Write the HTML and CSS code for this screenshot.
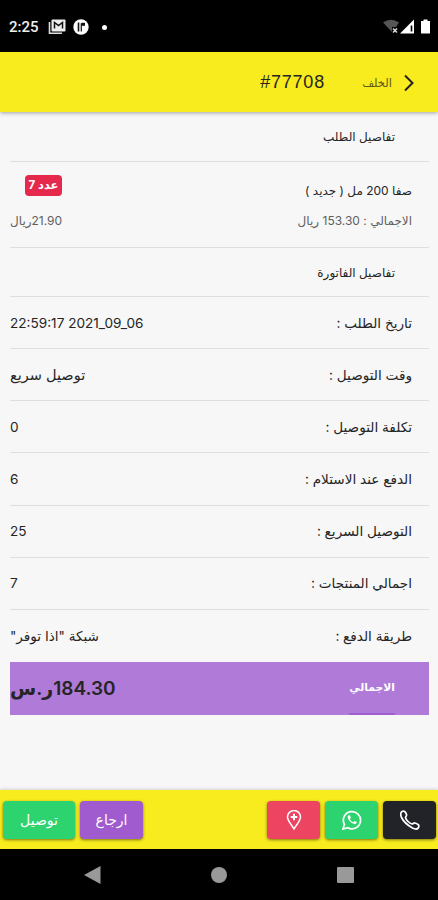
FILE: index.html
```
<!DOCTYPE html>
<html lang="ar" dir="rtl">
<head>
    <meta charset="UTF-8">
    <meta name="viewport" content="width=device-width, initial-scale=1.0">
    <title>تفاصيل الطلب</title>
    <link rel="stylesheet" href="styles.css">
</head>
<body>
    <div class="status-bar" dir="ltr">
        <span class="clock">2:25</span>
        <svg class="mail" width="18" height="16" viewBox="0 0 18 16">
            <path d="M1.500 3v11.300H14" fill="none" stroke="#ddd" stroke-width="1.600"/>
            <rect x="3.500" y="0.500" width="14" height="12" rx="1" fill="#eee"/>
            <path d="M6.500 9.500V3.500l4 3 4-3v6" fill="none" stroke="#111" stroke-width="1.500"/>
        </svg>
        <svg class="app" width="16" height="16" viewBox="0 0 16 16">
            <circle cx="8" cy="8" r="7.700" fill="#fff"/>
            <path d="M5.500 3.500v9" fill="none" stroke="#111" stroke-width="1.600"/>
            <path d="M8.300 12.500v-8.300" fill="none" stroke="#111" stroke-width="1.200"/>
            <path d="M8.500 3.800h3.500v3h-3.500z" fill="#111"/>
        </svg>
        <span class="dot"></span>
        <svg class="signals" width="48" height="16" viewBox="0 0 48 16">
            <path d="M0 3.500Q8-2 16 3.500L13 8H9v5z" fill="#555"/>
            <path d="M10 9.500l4 4m0-4l-4 4" stroke="#ddd" stroke-width="1.500"/>
            <path d="M17 14.500L31 .5v14z" fill="#fff"/>
            <path d="M28.500 6.500v6" stroke="#000" stroke-width="1.600"/>
            <path d="M38 2h2.500V.5h4V2H47v12.500h-9z" fill="#fff"/>
        </svg>
    </div>

    <header class="header">
        <svg class="chevron" width="12" height="18" viewBox="0 0 12 18">
            <path d="M2 1.500L9.500 9 2 16.500" fill="none" stroke="#222" stroke-width="2"/>
        </svg>
        <span class="back">الخلف</span>
        <h1 dir="ltr">#77708</h1>
    </header>

    <main class="content">
        <h2 class="title">تفاصيل الطلب</h2>
        <div class="product">
            <div class="line">
                <span class="name">صفا 200 مل ( جديد )</span>
                <span class="badge">عدد 7</span>
            </div>
            <div class="line muted">
                <span>الاجمالي : 153.30 ريال</span>
                <span>21.90ريال</span>
            </div>
        </div>
        <h2 class="title invoice">تفاصيل الفاتورة</h2>
        <div class="row"><span>تاريخ الطلب :</span><span dir="ltr">22:59:17 2021_09_06</span></div>
        <div class="row"><span>وقت التوصيل :</span><span class="text">توصيل سريع</span></div>
        <div class="row"><span>تكلفة التوصيل :</span><span>0</span></div>
        <div class="row"><span>الدفع عند الاستلام :</span><span>6</span></div>
        <div class="row"><span>التوصيل السريع :</span><span>25</span></div>
        <div class="row"><span>اجمالي المنتجات :</span><span>7</span></div>
        <div class="row last"><span>طريقة الدفع :</span><span>شبكة "اذا توفر"</span></div>
        <div class="total">
            <span class="total-label">الاجمالي</span>
            <span class="total-value">184.30ر.س</span>
        </div>
    </main>

    <footer class="footer">
        <button class="btn icon dark">
            <svg width="20" height="20" viewBox="0 0 20 20" fill="none" stroke="#fff" stroke-width="1.700">
                <path d="M2 1.500C4 .5 5.500 1.500 6.500 4.500c.5 1.500-1 2-1 3 .5 2.500 4 6 6.500 6.500 1.200.2 1.500-1.500 3-1 3.500 1 4.500 2.500 3.500 4.500-1 2-3 2-6 .5C8 15.500 3.500 11.500 1.500 7.500.5 5 .5 2.500 2 1.500z"/>
            </svg>
        </button>
        <button class="btn icon green">
            <svg width="20" height="20" viewBox="0 0 20 20" fill="none">
                <path d="M1 19l1.400-4.700A8.600 8.600 0 1 1 5.800 17.700z" stroke="#fff" stroke-width="1.700"/>
                <path d="M6.700 5.200c-1.400.8-1.300 2.500-.3 4.100 1.400 2.300 3.400 4.200 5.800 4.800 1.200.3 2.500-.6 2.700-2l-2.400-1.200-1.200 1.300C9.700 11.500 8.500 10.300 7.900 8.900l1-1-.9-2.500z" fill="#fff"/>
            </svg>
        </button>
        <button class="btn icon red">
            <svg width="16" height="20" viewBox="0 0 16 20" fill="none" stroke="#fff" stroke-width="1.500">
                <path d="M8 19C6 15 1.500 11 1.500 7a6.500 6.500 0 0 1 13 0c0 4-4.500 8-6.500 12z"/>
                <path d="M8 3.700v6.600M4.700 7h6.600" stroke-width="2"/>
            </svg>
        </button>
        <button class="btn purple">ارجاع</button>
        <button class="btn green wide">توصيل</button>
    </footer>

    <div class="nav-bar" dir="ltr">
        <svg width="17" height="18" viewBox="0 0 17 18"><path d="M16.500 0v18L0 9z" fill="#999"/></svg>
        <svg width="16" height="16" viewBox="0 0 16 16"><circle cx="8" cy="8" r="8" fill="#999"/></svg>
        <svg width="17" height="16" viewBox="0 0 17 16"><rect width="17" height="16" rx="1" fill="#999"/></svg>
    </div>
</body>
</html>
```
FILE: styles.css
```
* {
    margin: 0;
    padding: 0;
    box-sizing: border-box;
}

body {
    width: 438px;
    height: 900px;
    display: flex;
    flex-direction: column;
    background: #f7f7f7;
    color: #252525;
    font-family: Inter, "DejaVu Sans", sans-serif;
    font-size: 13px;
    overflow: hidden;
}

.status-bar {
    height: 52px;
    padding: 2px 7px 0 9px;
    display: flex;
    align-items: center;
    background: #000;
    color: #eee;
}

.clock {
    width: 30px;
    font-family: Roboto, sans-serif;
    font-size: 15px;
    font-weight: 500;
    white-space: nowrap;
}

.mail {
    margin-left: 9px;
}

.app {
    margin-left: 7px;
}

.dot {
    width: 5px;
    height: 5px;
    margin-left: 13px;
    border-radius: 50%;
    background: #fff;
}

.signals {
    margin-left: auto;
}

.header {
    height: 60px;
    padding: 1px 23px 0;
    display: flex;
    align-items: center;
    background: #f8eb1e;
    box-shadow: 0 1px 4px rgba(0, 0, 0, 0.35);
}

.back {
    width: 31px;
    margin-right: 11px;
    font-size: 11.5px;
    color: #5e591c;
    white-space: nowrap;
}

h1 {
    margin-right: 36px;
    font-family: "Liberation Sans", sans-serif;
    font-size: 18px;
    font-weight: 400;
    letter-spacing: 0.8px;
}

.content {
    flex: 1;
    padding: 0 9px 0 10px;
}

.title {
    height: 50px;
    padding: 0 34px;
    border-bottom: 1px solid #dedede;
    font-size: 12px;
    font-weight: 400;
    line-height: 49px;
}

.title.invoice {
    height: 49px;
}

.product {
    height: 86px;
    padding: 13px 17px 0 0;
    border-bottom: 1px solid #dedede;
    font-size: 12px;
}

.line {
    height: 30px;
    display: flex;
    justify-content: space-between;
    align-items: center;
}

.muted {
    color: #606060;
}

.badge {
    width: 37px;
    height: 21px;
    margin: 0 0 9px 15px;
    border-radius: 4px;
    background: #e5294c;
    color: #fff;
    font-size: 11.5px;
    font-weight: 700;
    line-height: 20px;
    text-align: center;
    white-space: nowrap;
}

.row {
    height: 52.15px;
    padding-right: 17px;
    display: flex;
    justify-content: space-between;
    align-items: center;
    border-bottom: 1px solid #dedede;
    font-size: 13.6px;
}

.row .text {
    font-size: 14.5px;
}

.row.last {
    border-bottom: none;
}

.total {
    height: 53px;
    padding-right: 34px;
    display: flex;
    justify-content: space-between;
    align-items: center;
    background: #b07ad8;
}

.total-label {
    height: 53px;
    border-bottom: 2px solid #a25fd0;
    color: #fff;
    font-size: 10.8px;
    font-weight: 700;
    line-height: 51px;
}

.total-value {
    font-size: 19px;
    font-weight: 600;
}

.footer {
    height: 59px;
    padding: 0 2px 0 3px;
    display: flex;
    align-items: center;
    gap: 5px;
    background: #f8eb1e;
    box-shadow: 0 -1px 3px rgba(0, 0, 0, 0.15);
}

.btn {
    width: 63px;
    height: 38px;
    display: flex;
    align-items: center;
    justify-content: center;
    border: none;
    border-radius: 4px;
    box-shadow: 0 1px 3px rgba(0, 0, 0, 0.5);
    color: #fff;
    font-family: inherit;
    font-size: 14px;
}

.icon {
    width: 53px;
}

.wide {
    width: 72px;
}

.dark {
    background: #222329;
}

.green {
    background: #2dd36f;
}

.red {
    background: #ed4561;
}

.purple {
    margin-right: auto;
    background: #a05bce;
}

.nav-bar {
    height: 51px;
    padding: 0 84px;
    display: flex;
    align-items: center;
    justify-content: space-between;
    background: #000;
}
```
